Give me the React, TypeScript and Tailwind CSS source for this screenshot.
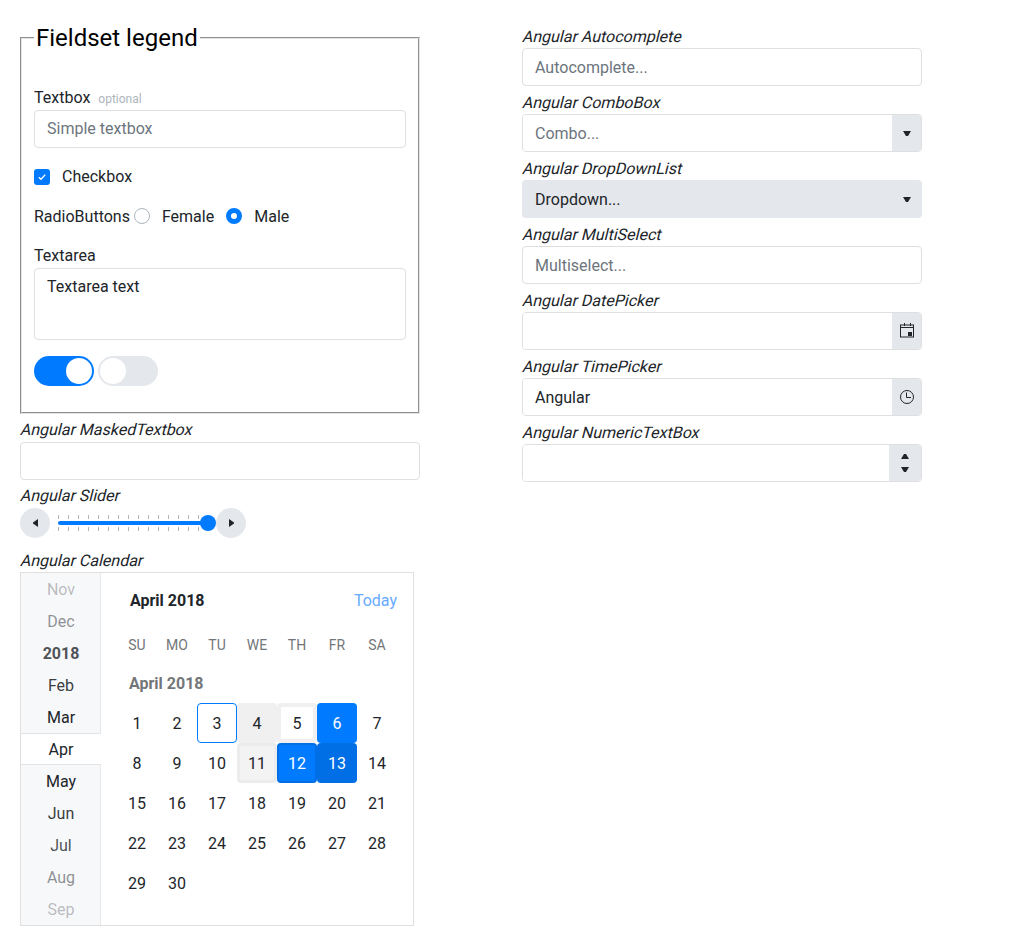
import { ReactNode } from "react";

const inputClass =
  "block w-full h-[38px] px-3 rounded border border-[#dedfe0] bg-white text-base text-[#212529] placeholder:text-[#6c757d] outline-none";

const Caret = ({ dir = "down" }: { dir?: "down" | "up" | "left" | "right" }) => {
  const side = dir === "left" || dir === "right";
  const points = {
    down: "0,1 8,1 5,6 3,6",
    up: "3,1 5,1 8,6 0,6",
    left: "6,0 6,8 1,4.6 1,3.4",
    right: "1,0 1,8 6,4.6 6,3.4",
  }[dir];
  return (
    <svg width={side ? 7 : 8} height={side ? 8 : 7} viewBox={side ? "0 0 7 8" : "0 0 8 7"} fill="#212529">
      <polygon points={points} />
    </svg>
  );
};

const CalendarIcon = () => (
  <svg width="16" height="16" viewBox="0 0 16 16" fill="none" stroke="#212529" strokeWidth="1">
    <rect x="1.5" y="2" width="13" height="12" />
    <path d="M1.5 4.5h13" />
    <path d="M5.5 0v3M11.5 0v3" />
    <rect x="9" y="9" width="4" height="4" fill="#212529" stroke="none" />
  </svg>
);

const ClockIcon = () => (
  <svg width="16" height="16" viewBox="0 0 16 16" fill="none" stroke="#212529" strokeWidth="1">
    <circle cx="8" cy="8" r="6.5" />
    <path d="M7.5 3.5v5h4.5" />
  </svg>
);

// regular Roboto leaned over, the reference has no true italic face
const Slanted = ({ children }: { children: ReactNode }) => (
  <div className="h-6 leading-[26px]">
    <span className="inline-block origin-[0_17px] skew-x-[-14deg]">{children}</span>
  </div>
);

const Field = ({ label, children }: { label: string; children: ReactNode }) => (
  <div className="mb-1">
    <Slanted>{label}</Slanted>
    {children}
  </div>
);

const Addon = ({ children, wide }: { children: ReactNode; wide?: boolean }) => (
  <div className={`flex flex-col items-center justify-center gap-[6px] shrink-0 bg-[#e4e7eb] ${wide ? "w-[32px]" : "-mr-px w-[30px]"}`}>
    {children}
  </div>
);

const InputWithAddon = ({ value, placeholder, children }: { value?: string; placeholder?: string; children: ReactNode }) => (
  <div className="flex h-[38px] rounded border border-[#dedfe0] overflow-hidden">
    <input readOnly value={value ?? ""} placeholder={placeholder} className="min-w-0 flex-1 px-3 pt-px bg-white outline-none placeholder:text-[#6c757d]" />
    {children}
  </div>
);

const months = [
  { t: "Nov", c: "text-[#212529]/30" },
  { t: "Dec", c: "text-[#212529]/50" },
  { t: "2018", c: "text-[#212529]/80 font-bold" },
  { t: "Feb", c: "text-[#212529]/90" },
  { t: "Mar", c: "text-[#212529]" },
  { t: "Apr", c: "text-[#212529]", active: true },
  { t: "May", c: "text-[#212529]" },
  { t: "Jun", c: "text-[#212529]/90" },
  { t: "Jul", c: "text-[#212529]/80" },
  { t: "Aug", c: "text-[#212529]/50" },
  { t: "Sep", c: "text-[#212529]/30" },
];

const dayClass: Record<number, string> = {
  3: "bg-white border border-[#007bff] rounded",
  4: "bg-[#f0f0f0] rounded",
  5: "bg-white border-4 border-[#f0f0f0] rounded",
  6: "bg-[#007bff] text-white rounded",
  11: "bg-[#f3f3f3] border-[3px] border-[#eaecee] rounded",
  12: "bg-[#007bff] border-2 border-[#006fe6] text-white rounded",
  13: "bg-[#006fe6] text-white rounded",
};

const Calendar = () => (
  <div className="flex w-[394px] h-[354px] border border-[#dfdfdf] bg-white">
    <ul className="w-[80px] shrink-0">
      {months.map((m) => (
        <li
          key={m.t}
          className={`flex h-8 items-center justify-center pt-px ${m.c} ${
            m.active
              ? "w-[80px] bg-white border-y border-[#e2e4e6]"
              : "bg-[#f7f8fa] border-r border-[#e6e8ea] pl-px"
          }`}
        >
          {m.t}
        </li>
      ))}
    </ul>
    <div className="flex-1 px-4">
      <div className="flex h-[52px] items-center justify-between pl-[13px] pt-1">
        <span className="font-bold">April 2018</span>
        <span className="text-[#66aaff]">Today</span>
      </div>
      <div className="grid grid-cols-[repeat(7,40px)]">
        {["SU", "MO", "TU", "WE", "TH", "FR", "SA"].map((d) => (
          <div key={d} className="flex h-10 items-center justify-center text-sm text-[#737679]">
            {d}
          </div>
        ))}
      </div>
      <div className="flex h-[38px] items-center pl-3 font-bold text-[#737679]">April 2018</div>
      <div className="grid grid-cols-[repeat(7,40px)] auto-rows-[40px]">
        {[0, 1, 2, 3, 4, 5, 6, 7, 8, 9, 10, 11, 12, 13, 14, 15, 16, 17, 18, 19, 20, 21, 22, 23, 24, 25, 26, 27, 28, 29].map((i) => {
          const day = i + 1;
          return (
            <div key={day} className={`flex items-center justify-center pt-px ${dayClass[day] ?? ""}`}>
              {day}
            </div>
          );
        })}
      </div>
    </div>
  </div>
);

const ticks = [0, 1, 2, 3, 4, 5, 6, 7, 8, 9, 10, 11, 12, 13, 14];

const TickRow = () => (
  <div className="flex h-1">
    {ticks.map((t) => (
      <span key={t} className="w-[10px] h-full border-l border-[#b5b5b5]" />
    ))}
  </div>
);

const SliderButton = ({ dir }: { dir: "left" | "right" }) => (
  <div className="flex h-[30px] w-[30px] shrink-0 items-center justify-center rounded-full bg-[#e4e7eb]">
    <Caret dir={dir} />
  </div>
);

const Slider = () => (
  <div className="flex h-[30px] w-[226px] items-center">
    <SliderButton dir="left" />
    <div className="w-[166px] shrink-0 pl-2">
      <TickRow />
      <div className="relative my-[2px] h-1 w-[150px] rounded-full bg-[#007bff]">
        <span className="absolute -right-2 -top-[6px] h-4 w-4 rounded-full bg-[#007bff]" />
      </div>
      <TickRow />
    </div>
    <SliderButton dir="right" />
  </div>
);

export default function App() {
  return (
    <div className="flex min-h-[946px] bg-white px-5 pt-5 font-['Roboto',sans-serif] text-base leading-6 text-[#212529]">
      <div className="w-[400px] shrink-0">
        <fieldset className="border-2 border-[#e4e4e4] [border-style:groove] px-3 pb-[26px] pt-[30px]">
          <legend className="px-[2px] text-2xl leading-9 text-black">Fieldset legend</legend>
          <div className="flex h-6 items-baseline">
            Textbox <span className="ml-2 text-xs text-[#adb5bd]">optional</span>
          </div>
          <input readOnly placeholder="Simple textbox" className={`${inputClass} pb-[2px]`} />

          <div className="mt-[17px] flex h-6 items-center">
            <span className="flex h-4 w-4 items-center justify-center rounded-[3px] bg-[#007bff]">
              <svg width="10" height="10" viewBox="0 0 10 10" fill="none" stroke="white" strokeWidth="1.3">
                <path d="M1.8 5.2 4 7.3 8.2 2.8" />
              </svg>
            </span>
            <span className="ml-3">Checkbox</span>
          </div>

          <div className="mt-[15px] flex h-6 items-center">
            <span className="pt-[2px]">RadioButtons</span>
            <span className="ml-[4px] h-4 w-4 rounded-full border border-[#adb5bd] bg-white" />
            <span className="ml-3 pt-[2px]">Female</span>
            <span className="ml-3 h-4 w-4 rounded-full border-[5px] border-[#007bff] bg-white" />
            <span className="ml-3 pt-[2px]">Male</span>
          </div>

          <div className="mt-[15px] h-6 leading-[26px]">Textarea</div>
          <textarea
            readOnly
            defaultValue="Textarea text"
            className="mt-px block h-[72px] w-full resize-none rounded border border-[#dedfe0] px-3 pb-[5px] pt-[6px] outline-none"
          />

          <div className="mt-4 flex gap-1">
            <div className="flex h-[30px] w-[60px] items-center justify-end rounded-full bg-[#007bff] pr-[2px]">
              <span className="h-[26px] w-[26px] rounded-full bg-white" />
            </div>
            <div className="flex h-[30px] w-[60px] items-center rounded-full bg-[#e4e7eb] pl-[2px]">
              <span className="h-[26px] w-[26px] rounded-full bg-white" />
            </div>
          </div>
        </fieldset>

        <div className="mt-[3px]">
          <Slanted>Angular MaskedTextbox</Slanted>
        </div>
        <input readOnly className={`${inputClass} mt-px`} />

        <div className="mt-[3px]">
          <Slanted>Angular Slider</Slanted>
        </div>
        <div className="mt-px">
          <Slider />
        </div>

        <div className="mt-[10px]">
          <Slanted>Angular Calendar</Slanted>
        </div>
        <Calendar />
      </div>

      <div className="ml-[102px] w-[400px] shrink-0 pt-1">
        <Field label="Angular Autocomplete">
          <input readOnly placeholder="Autocomplete..." className={inputClass} />
        </Field>
        <Field label="Angular ComboBox">
          <InputWithAddon placeholder="Combo...">
            <Addon>
              <Caret />
            </Addon>
          </InputWithAddon>
        </Field>
        <Field label="Angular DropDownList">
          <div className="flex h-[38px] items-center justify-between rounded bg-[#e4e7eb] pl-[13px] pr-[11px] pt-px">
            <span>Dropdown...</span>
            <Caret />
          </div>
        </Field>
        <Field label="Angular MultiSelect">
          <input readOnly placeholder="Multiselect..." className={inputClass} />
        </Field>
        <Field label="Angular DatePicker">
          <InputWithAddon>
            <Addon>
              <CalendarIcon />
            </Addon>
          </InputWithAddon>
        </Field>
        <Field label="Angular TimePicker">
          <InputWithAddon value="Angular">
            <Addon>
              <ClockIcon />
            </Addon>
          </InputWithAddon>
        </Field>
        <Field label="Angular NumericTextBox">
          <InputWithAddon>
            <Addon wide>
              <Caret dir="up" />
              <Caret />
            </Addon>
          </InputWithAddon>
        </Field>
      </div>
    </div>
  );
}
